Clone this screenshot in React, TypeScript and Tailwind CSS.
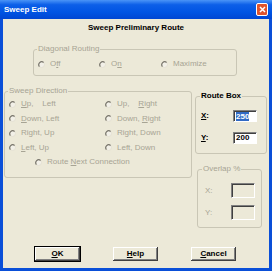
import React from "react";

const dis = "text-[#a7a494]";

function Radio({ label, className = "" }: { label: React.ReactNode; className?: string }) {
  return (
    <div className={`flex items-center gap-[5px] ${className}`}>
      <svg width="7" height="7" viewBox="0 0 7 7" className="shrink-0">
        <circle cx="3.5" cy="3.5" r="3" fill="#f2f0e8" stroke="#e4e1d3" strokeWidth="1" />
        <path d="M5.6 1.4 A3 3 0 0 0 1.4 5.6" fill="none" stroke="#77746a" strokeWidth="1.2" />
      </svg>
      <span className={`whitespace-pre ${dis}`}>{label}</span>
    </div>
  );
}

function Field({ children, className = "", disabled = false }: { children?: React.ReactNode; className?: string; disabled?: boolean }) {
  return (
    <div
      className={`border-t border-l border-t-[#808080] border-l-[#808080] border-r border-b border-r-[#ffffff] border-b-[#ffffff] shadow-[inset_1px_1px_0_#404040] flex items-center pl-[2px] ${
        disabled ? "bg-[#ece9d8]" : "bg-white"
      } ${className}`}
    >
      {children}
    </div>
  );
}

function Button({ children, def = false }: { children: React.ReactNode; def?: boolean }) {
  return (
    <button
      className={`w-[45px] h-[14px] bg-[#ece9d8] font-bold text-black leading-none flex items-center justify-center shadow-[inset_-1px_-1px_0_#404040,inset_1px_1px_0_#ffffff,inset_-2px_-2px_0_#808080] ${
        def ? "outline outline-1 outline-black" : ""
      }`}
    >
      {children}
    </button>
  );
}

export default function App() {
  return (
    <div className="w-[272px] h-[271px] flex flex-col bg-[#0a4fd8] font-['Liberation_Sans',Arial,sans-serif] text-[8px] leading-[10px] text-black">
      {/* заголовок окна */}
      <div className="h-[19px] shrink-0 flex items-center justify-between pl-[4px] pr-[4px] bg-[linear-gradient(180deg,#4a94f7,#0c5fe8_25%,#0054e3_65%,#0046d2)]">
        <span className="text-white font-bold text-[8px]">Sweep Edit</span>
        <div className="w-[12px] h-[13px] rounded-[2px] border border-white bg-[#e0542c] flex items-center justify-center">
          <svg width="7" height="7" viewBox="0 0 7 7">
            <path d="M1 1 L6 6 M6 1 L1 6" stroke="#fff" strokeWidth="1.5" />
          </svg>
        </div>
      </div>

      {/* клиентская область */}
      <div className="flex-1 mx-[3px] mb-[3px] bg-[#ece9d8] flex flex-col">
        <div className="mt-[4px] text-center font-bold">Sweep Preliminary Route</div>

        <fieldset className="mt-[11px] ml-[30px] w-[204px] h-[32px] border border-[#c9c6b5] rounded-[3px]">
          <legend className={`ml-[3px] px-[1px] ${dis}`}>Diagonal Routing</legend>
          <div className="grid grid-cols-[61px_62px_auto] pl-[4px] pt-[5px]">
            <Radio label={<>O<u>f</u>f</>} />
            <Radio label={<>O<u>n</u></>} />
            <Radio label="Maximize" />
          </div>
        </fieldset>

        <div className="flex items-start mt-[10px]">
          <fieldset className="ml-[1px] w-[188px] h-[92px] border border-[#c9c6b5] rounded-[3px]">
            <legend className={`ml-[3px] px-[1px] ${dis}`}>Sweep Direction</legend>
            <div className="grid grid-cols-[96px_auto] auto-rows-[14.5px] items-center pl-[4px] pt-[1px]">
              <Radio label={<><u>U</u>p,    Left</>} />
              <Radio label={<>Up,    <u>R</u>ight</>} />
              <Radio label={<><u>D</u>own, Left</>} />
              <Radio label={<>Down, <u>R</u>ight</>} />
              <Radio label="Right, Up" />
              <Radio label="Right, Down" />
              <Radio label={<><u>L</u>eft, Up</>} />
              <Radio label="Left, Down" />
              <Radio className="col-span-2 pl-[26px]" label={<>Route <u>N</u>ext Connection</>} />
            </div>
          </fieldset>

          <div className="flex flex-col">
            <fieldset className="mt-[5px] ml-[3px] w-[72px] h-[63px] border border-[#c9c6b5] rounded-[3px]">
              <legend className="ml-[4px] px-[1px] font-bold">Route Box</legend>
              <div className="grid grid-cols-[32px_24px] auto-rows-[12px] gap-y-[10px] items-center pl-[5px] pt-[9px]">
                <span className="font-bold"><u>X</u>:</span>
                <Field className="h-[12px] font-bold">
                  <span className="bg-[#316ac5] text-white leading-[9px]">250</span>
                </Field>
                <span className="font-bold"><u>Y</u>:</span>
                <Field className="h-[12px] font-bold">200</Field>
              </div>
            </fieldset>

            <fieldset className="mt-[10px] ml-[5px] w-[65px] h-[64px] border border-[#c9c6b5] rounded-[3px]">
              <legend className={`ml-[4px] px-[1px] ${dis}`}>Overlap %</legend>
              <div className="grid grid-cols-[26px_24px] auto-rows-[15px] gap-y-[7px] items-center pl-[7px] pt-[9px]">
                <span className={dis}>X:</span>
                <Field disabled className="h-[15px]" />
                <span className={dis}>Y:</span>
                <Field disabled className="h-[15px]" />
              </div>
            </fieldset>
          </div>
        </div>

        <div className="flex gap-[33px] ml-[32px] mt-[19px]">
          <Button def><u>O</u>K</Button>
          <Button><u>H</u>elp</Button>
          <Button><u>C</u>ancel</Button>
        </div>
      </div>
    </div>
  );
}
